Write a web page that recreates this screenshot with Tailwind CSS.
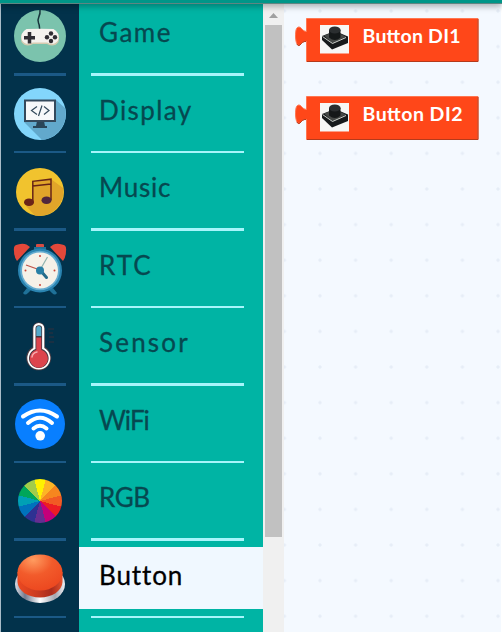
<!DOCTYPE html>
<html lang="en"><head><meta charset="utf-8"><title>Blocks</title>
<script src="https://cdn.jsdelivr.net/npm/@tailwindcss/browser@4"></script></head>
<body class="w-[502px] h-[632px] overflow-hidden bg-[#f4f9ff] font-['Lato',sans-serif]">
<div class="h-[632px] flex flex-col">
<header class="h-[4px] shrink-0 bg-[#009688] border-b border-[#5f8582] relative z-10 shadow-[0_1px_7px_rgba(0,0,0,0.55)]"></header>
<main class="flex h-[628px] overflow-hidden">
<nav class="w-[79px] shrink-0 bg-[#02324b] border-l border-[#a9bcc8] border-r-2 border-r-[#05304a]">
<ul class="-mt-[6px] flex flex-col items-center pl-px">
<li class="h-[75px] pt-px flex items-center"><svg class="w-[54px] h-[54px]" viewBox="0 0 54 54"><circle cx="27" cy="27" r="26" fill="#7bc3ad"/><path d="M27 1C28 8 23 9 25.500 14C27 17 26 19 27 21" fill="none" stroke="#17343c" stroke-width="1.500"/><path d="M13 21.500Q27 20 41 21.500Q48 25 45.500 33Q41 39 34 35H20Q13 39 8.500 33Q6 25 13 21.500Z" fill="#d6cbb0"/><path d="M13.500 20Q27 19.500 40.500 20Q47.500 24 45 31.500Q41 37 34 33.500H20Q13 37 9 31.500Q6.500 24 13.500 20Z" fill="#f5f2ee"/><path d="M16.500 23v11.500M11 28.800h11" stroke="#302d33" stroke-width="3.500"/><g fill="#302d33"><circle cx="38" cy="24.500" r="2.200"/><circle cx="38" cy="32" r="2.200"/><circle cx="34" cy="28.300" r="2.200"/><circle cx="42" cy="28.300" r="2.200"/></g></svg></li>
<li class="w-[52px] h-[3px] bg-[#1b5986]"></li>
<li class="h-[75px] pt-px flex items-center"><svg class="w-[54px] h-[54px]" viewBox="0 0 54 54"><circle cx="27" cy="27" r="26" fill="#83d6fb"/><path d="M43 13L52 21A26 26 0 0 1 29 53L11 35Z" fill="#62a9cc"/><path d="M24 34h7l1 5h2v2H20v-2h3Z" fill="#294558"/><rect x="11" y="12.500" width="32" height="22.500" fill="#34495c"/><rect x="13" y="14.500" width="28" height="18.500" fill="#f7f8fa"/><path d="M24 19.500L18.500 23.500L24 27.500M31 19.500L36 23.500L31 27.500M29 18.500L25.500 29" fill="none" stroke="#34495c" stroke-width="1.200"/></svg></li>
<li class="w-[52px] h-[2px] bg-[#1b5986]"></li>
<li class="h-[75px] pt-px flex items-center"><svg class="w-[54px] h-[54px]" viewBox="0 0 54 54"><circle cx="27" cy="28" r="24" fill="#f1c32e"/><path d="M38 15L50 24A24 24 0 0 1 22 51.500L13 42L20 35V18Z" fill="#e1a52a"/><path d="M19.800 38V17.300L38 15.200V36M19.800 22L38 20" fill="none" stroke="#672417" stroke-width="1.500"/><ellipse cx="16" cy="38.300" rx="5" ry="3.800" fill="#6b2318"/><ellipse cx="33.500" cy="36.300" rx="5" ry="3.800" fill="#50263d"/></svg></li>
<li class="w-[52px] h-[3px] bg-[#1b5986]"></li>
<li class="h-[75px] pt-px flex items-center"><svg class="w-[54px] h-[54px]" viewBox="0 0 54 54"><path d="M1 9Q0 3 5 2.500Q12 0 17 5L4 19Q1 15 1 9ZM53 9Q54 3 49 2.500Q42 0 37 5L50 19Q53 15 53 9Z" fill="#e3483a"/><rect x="23" y="2" width="8" height="4" rx="1" fill="#d64b42"/><path d="M21 5h12v5H21ZM14 46l-4 5q2 3 5 0l3-3ZM40 46l4 5q-2 3-5 0l-3-3Z" fill="#1f7198"/><circle cx="27" cy="28.500" r="22" fill="#2a84b1"/><circle cx="27" cy="28.500" r="19.800" fill="#64acd0"/><circle cx="27" cy="28.500" r="18" fill="#f5f1e8"/><g fill="#c94238"><circle cx="27" cy="14" r="1"/><circle cx="27" cy="43" r="1"/><circle cx="12.500" cy="28.500" r="1"/><circle cx="41.500" cy="28.500" r="1"/></g><path d="M27 28L34.500 15" stroke="#8fb3ae" stroke-width="1.200"/><path d="M27 28L13 23" stroke="#bf5147" stroke-width="1.300"/><path d="M27 28L33.500 35.500" stroke="#256b89" stroke-width="3" stroke-linecap="round"/><circle cx="27" cy="28.500" r="4" fill="#277fa5"/></svg></li>
<li class="w-[52px] h-[2px] bg-[#1b5986]"></li>
<li class="h-[75px] pt-px flex items-center"><svg class="w-[54px] h-[54px]" viewBox="0 0 54 54"><path d="M19.500 28V9.500a6.200 6.200 0 0 1 12.400 0V28A12.500 12.500 0 1 1 19.500 28Z" fill="#4e3e45"/><path d="M20.300 29V9.500a5.500 5.500 0 0 1 11 0V29A11.500 11.500 0 1 1 20.300 29Z" fill="#fff"/><path d="M22.500 30V9.500a3.300 3.300 0 0 1 6.600 0V30A9.800 9.800 0 1 1 22.500 30Z" fill="#433640"/><path d="M23.300 17V9.500a2.500 2.500 0 0 1 5 0V17Z" fill="#54aacb"/><path d="M23.300 18.500h5V31A9 9 0 1 1 23.300 31Z" fill="#dc444d"/><path d="M19 38Q19.500 34 24 33" fill="none" stroke="#f7aaad" stroke-width="1.500" stroke-linecap="round"/><path d="M35 10h6M36 14h4M36 18h5M36 23h5" stroke="#322f3c" stroke-width="1"/></svg></li>
<li class="w-[52px] h-[3px] bg-[#1b5986]"></li>
<li class="h-[75px] pt-px flex items-center"><svg class="w-[54px] h-[54px]" viewBox="0 0 54 54"><circle cx="27" cy="27" r="25" fill="#087fff"/><g fill="none" stroke="#fff" stroke-width="4" stroke-linecap="round"><path d="M10 19.500Q27 7.500 44 19.500M15 26Q27 15.500 39 26M20.500 31.500Q27 26 33.500 31.500"/></g><circle cx="27.200" cy="38.800" r="4.800" fill="#fff"/></svg></li>
<li class="w-[52px] h-[2px] bg-[#1b5986]"></li>
<li class="h-[75px] pt-px flex items-center"><div class="w-[54px] h-[54px] flex items-center justify-center"><div class="w-[44px] h-[44px] rounded-full bg-[conic-gradient(from_-15deg,#fff200_0_30deg,#fdb525_0_60deg,#f6861f_0_90deg,#f15a24_0_120deg,#ed1c24_0_150deg,#c4007a_0_180deg,#662d91_0_210deg,#2e3192_0_240deg,#0072bc_0_270deg,#00a0b5_0_300deg,#00a65a_0_330deg,#a2cc4a_0_360deg)]"></div></div></li>
<li class="w-[52px] h-[3px] bg-[#1b5986]"></li>
<li class="h-[75px] pt-px flex items-center"><svg class="w-[54px] h-[54px]" viewBox="0 0 54 54"><defs><linearGradient id="metal"><stop offset="0" stop-color="#d7dce6"/><stop offset=".2" stop-color="#727a8d"/><stop offset=".5" stop-color="#ffffff"/><stop offset=".8" stop-color="#a3a6b1"/><stop offset="1" stop-color="#edf0f5"/></linearGradient><radialGradient id="cap" cx=".35" cy=".15" r=".85"><stop offset="0" stop-color="#ff9c60"/><stop offset=".5" stop-color="#f25b2b"/><stop offset="1" stop-color="#ed4920"/></radialGradient><linearGradient id="side"><stop offset="0" stop-color="#ed4921"/><stop offset=".45" stop-color="#c93b20"/><stop offset=".75" stop-color="#a92c1d"/><stop offset="1" stop-color="#e4512c"/></linearGradient></defs><ellipse cx="27" cy="32" rx="25" ry="19" fill="url(#metal)"/><path d="M4.500 20V30C5 39 15 45.500 27 45.500S49 39 49.500 30V20Z" fill="url(#side)"/><ellipse cx="27" cy="20.500" rx="22.500" ry="18" fill="url(#cap)"/></svg></li>
<li class="w-[52px] h-[2px] bg-[#1b5986]"></li>
</ul>
</nav>
<section class="w-[184px] shrink-0 bg-[#00b4a4] overflow-hidden text-[26px] leading-[56px] text-[#064850] [-webkit-text-stroke:0.3px_currentColor]">
<ul class="-mt-[6px]">
<li class="h-[75px] pt-[6px]"><div class="h-[62px] pl-5 tracking-[1.5px]">Game</div></li>
<li class="ml-3 w-[153px] h-[3px] bg-[#a7f5fb]"></li>
<li class="h-[75px] pt-[6px]"><div class="h-[62px] pl-5 tracking-[1.4px]">Display</div></li>
<li class="ml-3 w-[153px] h-[2px] bg-[#a7f5fb]"></li>
<li class="h-[75px] pt-[6px]"><div class="h-[62px] pl-5 tracking-[0.8px]">Music</div></li>
<li class="ml-3 w-[153px] h-[3px] bg-[#a7f5fb]"></li>
<li class="h-[75px] pt-[6px]"><div class="h-[62px] pl-5 tracking-[2px]">RTC</div></li>
<li class="ml-3 w-[153px] h-[2px] bg-[#a7f5fb]"></li>
<li class="h-[75px] pt-[6px]"><div class="h-[62px] pl-5 tracking-[2.2px]">Sensor</div></li>
<li class="ml-3 w-[153px] h-[3px] bg-[#a7f5fb]"></li>
<li class="h-[75px] pt-[6px]"><div class="h-[62px] pl-5 tracking-[-1px]">WiFi</div></li>
<li class="ml-3 w-[153px] h-[2px] bg-[#a7f5fb]"></li>
<li class="h-[75px] pt-[6px]"><div class="h-[62px] pl-5 tracking-[-0.4px]">RGB</div></li>
<li class="ml-3 w-[153px] h-[3px] bg-[#a7f5fb]"></li>
<li class="h-[75px] pt-[6px]"><div class="h-[62px] pl-5 tracking-[0.9px] bg-[#f0f8ff] text-black">Button</div></li>
<li class="ml-3 w-[153px] h-[2px] bg-[#a7f5fb]"></li>
</ul>
</section>
<div class="w-[21px] shrink-0 bg-[#f0f0f0] pl-[2px] flex flex-col">
<svg class="w-[17px] h-[21px]" viewBox="0 0 17 21"><path d="M4 14L8.500 9L13 14Z" fill="#a0a0a0"/></svg>
<div class="w-[17px] h-[512px] bg-[#c1c1c1]"></div>
</div>
<section class="flex-1 border-r border-white overflow-hidden">
<svg class="w-[217px] h-[628px]" viewBox="284 4 217 628" role="img">
<defs><pattern id="dots" x="302.200" y="-6.800" width="35.600" height="35.600" patternUnits="userSpaceOnUse"><circle cx="17.800" cy="17.800" r="1.700" fill="#e6edf7"/></pattern>
<g id="block"><path d="M306.500 18.500H478V61.500H306.500V41.500C303 41 302 43 300 45C297 46 296 43 295.500 37C295.500 31 296 27 299 27C302 27.500 302 31 306.500 31.500Z" fill="#ff4719" stroke="#ff7650"/><path d="M478 19V61.500H307M306 41.500C303 41 302 43 300 45C298.500 46 297.500 45.500 297 44" fill="none" stroke="#b53a1b"/><rect x="320" y="25" width="29" height="28.500" fill="#f7f7f5"/><path d="M322 36L335 31L348 36.500V43L332 49.500L322 40Z" fill="#171a1b"/><path d="M324 35.500L335 31.500L346 36.500L332.500 43.500Z" fill="#454846"/><path d="M322.500 36.500L332.500 43.500L346 37.500" fill="none" stroke="#ccd0cb" stroke-width="1"/><path d="M329 30V37.500Q335 42.500 340.500 37.500V30Z" fill="#151819"/><ellipse cx="334.800" cy="30" rx="5.800" ry="3.500" fill="#2b2e30"/></g></defs>
<rect x="284" y="4" width="217" height="628" fill="url(#dots)"/>
<use href="#block"/><use href="#block" y="78"/>
<g class="font-['Lato',sans-serif] font-bold" fill="#fff" font-size="19.500"><text x="362.500" y="43" textLength="98">Button DI1</text><text x="362.500" y="121" textLength="100">Button DI2</text></g>
</svg>
</section>
</main>
</div>
</body></html>
